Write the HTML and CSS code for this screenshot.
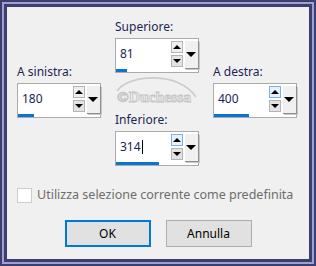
FILE: index.html
```html
<!DOCTYPE html>
<html lang="it">
<head>
<meta charset="utf-8">
<title>Margini</title>
<link rel="stylesheet" href="styles.css">
</head>
<body>
<div class="frame">
  <div class="frame-mid">
    <div class="dialog">
      <div class="fields">
        <div class="col side">
          <div class="label">A sinistra:</div>
          <div class="spin">
            <div class="value"><span class="num">180</span><span class="bar" style="width:16px"></span></div>
            <div class="arrows"><span class="btn up"></span><span class="btn down"></span></div>
            <div class="drop"></div>
          </div>
        </div>
        <div class="col mid">
          <div class="label">Superiore:</div>
          <div class="spin">
            <div class="value"><span class="num">81</span><span class="bar" style="width:11px"></span></div>
            <div class="arrows"><span class="btn up"></span><span class="btn down"></span></div>
            <div class="drop"></div>
          </div>
          <svg class="watermark" width="84" height="39" viewBox="0 0 84 39">
            <path d="M2 18 C 14 1, 64 -2, 81 24" fill="none" stroke="#cbcbcb" stroke-width="1.6"/>
            <text x="2" y="29" textLength="74" lengthAdjust="spacingAndGlyphs" font-family="Liberation Serif, serif" font-weight="bold" font-size="15" fill="#eaeaea" stroke="#c4c4c4" stroke-width="0.8">©Duchessa</text>
          </svg>
          <div class="label">Inferiore:</div>
          <div class="spin">
            <div class="value"><span class="num">314<span class="caret"></span></span><span class="bar" style="width:43px"></span></div>
            <div class="arrows"><span class="btn up hot"></span><span class="btn down"></span></div>
            <div class="drop"></div>
          </div>
        </div>
        <div class="col side">
          <div class="label">A destra:</div>
          <div class="spin">
            <div class="value"><span class="num">400</span><span class="bar" style="width:35px"></span></div>
            <div class="arrows"><span class="btn up hot"></span><span class="btn down"></span></div>
            <div class="drop"></div>
          </div>
        </div>
      </div>
      <label class="check"><span class="box"></span><span class="check-text">Utilizza selezione corrente come predefinita</span></label>
      <div class="buttons">
        <button class="button default">OK</button>
        <button class="button">Annulla</button>
      </div>
    </div>
  </div>
</div>
</body>
</html>
```
FILE: styles.css
```css
html, body {
  margin: 0;
  padding: 0;
  background: #3b3e6e;
}
body {
  font-family: "Noto Sans", "Open Sans", sans-serif;
  font-size: 12px;
  line-height: 16px;
}
.frame {
  width: 316px;
  height: 266px;
  box-sizing: border-box;
  background: #3b3e6e;
  padding: 2px;
}
.frame-mid {
  height: 100%;
  box-sizing: border-box;
  border: 2px solid #9ea1cf;
  background: #3b3e6e;
  padding: 3px;
}
.dialog {
  height: 100%;
  background: #f0f0f0;
  display: flex;
  flex-direction: column;
}
.fields {
  display: flex;
  gap: 14px;
  padding: 12px 0 0 10px;
  align-items: flex-start;
}
.col {
  width: 84px;
  display: flex;
  flex-direction: column;
}
.side {
  margin-top: 45px;
}
.label {
  color: #1d2550;
  height: 16px;
  margin-bottom: 3px;
  white-space: nowrap;
}
.spin {
  box-sizing: border-box;
  width: 84px;
  height: 35px;
  border: 1px solid #ababab;
  background: #fff;
  display: grid;
  grid-template-columns: 53px 12px 14px;
  column-gap: 2px;
  padding-right: 1px;
}
.value {
  display: flex;
  flex-direction: column;
  padding-top: 7px;
}
.num {
  color: #182456;
  padding-left: 4px;
  height: 16px;
  display: flex;
  align-items: center;
}
.caret {
  display: inline-block;
  width: 1px;
  height: 14px;
  background: #000;
  margin-left: 1px;
}
.bar {
  display: block;
  height: 3px;
  margin-top: auto;
  background: #0a74d0;
}
.arrows {
  display: flex;
  flex-direction: column;
  gap: 2px;
  padding-top: 2px;
}
.btn {
  box-sizing: border-box;
  height: 12px;
  border: 1px solid #b4b4b4;
  background: #efefef;
  position: relative;
}
.btn.down {
  background: #e3e3e3;
}
.btn.hot {
  border-color: #7ab2e8;
  background: #e6f1fb;
}
.btn::after {
  content: "";
  position: absolute;
  left: 1px;
  top: 3px;
  border-left: 4px solid transparent;
  border-right: 4px solid transparent;
}
.btn.up::after {
  border-bottom: 4px solid #000;
}
.btn.down::after {
  border-top: 4px solid #000;
}
.drop {
  margin-top: 2px;
  height: 28px;
  box-sizing: border-box;
  background: #f0f0f0;
  border-right: 1px solid #8f8f8f;
  border-bottom: 1px solid #8f8f8f;
  box-shadow: 1px 1px 0 #c8c8c8;
  position: relative;
}
.drop::after {
  content: "";
  position: absolute;
  left: 1px;
  top: 11px;
  border-left: 5px solid transparent;
  border-right: 5px solid transparent;
  border-top: 5px solid #000;
}
.watermark {
  display: block;
}
.check {
  display: flex;
  align-items: center;
  gap: 5px;
  margin: 21px 0 0 10px;
}
.box {
  width: 15px;
  height: 15px;
  box-sizing: border-box;
  border: 1px solid #cccccc;
  background: #fff;
}
.check-text {
  color: #6d6d6d;
  font-size: 12.5px;
}
.buttons {
  display: flex;
  justify-content: center;
  gap: 15px;
  margin-top: 17px;
}
.button {
  width: 86px;
  height: 27px;
  box-sizing: border-box;
  border: 1px solid #adadad;
  background: #e1e1e1;
  font-family: "Noto Sans", "Open Sans", sans-serif;
  font-size: 12px;
  color: #000;
  padding: 0;
}
.button.default {
  border: 2px solid #0078d7;
}
```
